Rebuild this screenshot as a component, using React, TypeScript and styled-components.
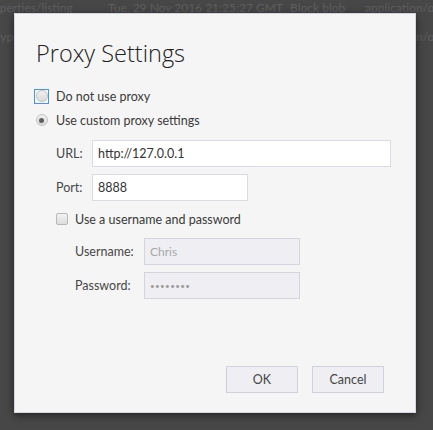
import React from 'react';
import styled, { createGlobalStyle } from 'styled-components';

const GlobalStyle = createGlobalStyle`
  html, body {
    margin: 0;
    padding: 0;
    background: #474747;
  }
  body {
    font-family: "Lato", "Noto Sans", sans-serif;
  }
`;

const Page = styled.div`
  position: relative;
  width: 433px;
  height: 430px;
  overflow: hidden;
  background: #474747;
`;

const Backdrop = styled.div`
  display: flex;
  flex-direction: column;
  gap: 13px;
  color: #5f5f5f;
  font-size: 12px;
  white-space: nowrap;
`;

const BackRow = styled.div<{ $shift: number }>`
  display: flex;
  margin-left: ${(p) => p.$shift}px;
  height: 16px;
  line-height: 16px;
`;

const BackCell = styled.span<{ $width?: number }>`
  flex: 0 0 ${(p) => (p.$width ? `${p.$width}px` : 'auto')};
  overflow: hidden;
`;

const Dialog = styled.div`
  position: absolute;
  left: 14px;
  top: 13px;
  width: 402px;
  height: 400px;
  background: #f5f5f5;
  border: 1px solid #d4d6e0;
  box-shadow: 0 2px 8px rgba(0, 0, 0, 0.55);
  display: flex;
  flex-direction: column;
  padding: 0 31px 0 19px;
  box-sizing: border-box;
  color: #3a3a3a;
  font-size: 12.5px;
`;

const Title = styled.h1`
  margin: 24px 0 20px 2px;
  font-family: "Open Sans", "Noto Sans", sans-serif;
  font-weight: 300;
  font-size: 23.5px;
  line-height: 30px;
  color: #222;
`;

const OptionRow = styled.label<{ $indent?: number }>`
  display: flex;
  align-items: center;
  gap: 7px;
  height: 16px;
  margin-bottom: 8px;
  padding-left: ${(p) => p.$indent ?? 0}px;
`;

const RadioFrame = styled.span<{ $focused?: boolean }>`
  display: flex;
  align-items: center;
  justify-content: center;
  width: 15px;
  height: 15px;
  box-sizing: border-box;
  border: 1px solid ${(p) => (p.$focused ? '#4a93ea' : 'transparent')};
`;

const Radio = styled.span<{ $checked?: boolean }>`
  position: relative;
  width: 12px;
  height: 12px;
  border-radius: 50%;
  border: 1px solid #c4c4c4;
  background: linear-gradient(#f0f0f0, #dadada);
  box-sizing: border-box;
  &::after {
    content: '';
    display: ${(p) => (p.$checked ? 'block' : 'none')};
    position: absolute;
    left: 2.5px;
    top: 2.5px;
    width: 5px;
    height: 5px;
    border-radius: 50%;
    background: #5e5e5e;
  }
`;

const Checkbox = styled.span`
  width: 12px;
  height: 12px;
  border-radius: 2px;
  border: 1px solid #b8b8b8;
  background: linear-gradient(#f2f2f2, #dcdcdc);
  box-sizing: border-box;
`;

const Fields = styled.div<{ $label: number; $indent: number; $margin: string }>`
  display: grid;
  grid-template-columns: ${(p) => p.$label}px auto;
  row-gap: 7px;
  align-items: center;
  padding-left: ${(p) => p.$indent}px;
  margin: ${(p) => p.$margin};
`;

const FieldLabel = styled.span`
  color: #474747;
`;

const Input = styled.div<{ $width: number; $disabled?: boolean }>`
  width: ${(p) => p.$width}px;
  height: 27px;
  box-sizing: border-box;
  border: 1px solid ${(p) => (p.$disabled ? '#d4d4dc' : '#dadae2')};
  background: ${(p) => (p.$disabled ? '#efeff3' : '#fff')};
  color: ${(p) => (p.$disabled ? '#a8a8a8' : '#333')};
  display: flex;
  align-items: center;
  padding-left: 5px;
  font-size: ${(p) => (p.$disabled ? '12px' : '12.5px')};
`;

const Dots = styled.span`
  font-size: 8px;
  letter-spacing: 0.4px;
  color: #9c9c9c;
`;

const Footer = styled.div`
  margin-top: auto;
  margin-bottom: 19px;
  display: flex;
  justify-content: flex-end;
  gap: 14px;
`;

const Button = styled.button`
  width: 72px;
  height: 27px;
  border: 1px solid #cfd2dd;
  background: #efeff3;
  color: #444;
  font-family: inherit;
  font-size: 12.5px;
  padding: 0;
`;

export default function App() {
  return (
    <Page>
      <GlobalStyle />
      <Backdrop>
        <BackRow $shift={-18}>
          <BackCell $width={126}>properties/listing</BackCell>
          <BackCell $width={182}>Tue, 29 Nov 2016 21:25:27 GMT</BackCell>
          <BackCell $width={75}>Block blob</BackCell>
          <BackCell>application/octet-stream</BackCell>
        </BackRow>
        <BackRow $shift={-4}>
          <BackCell $width={369}>type</BackCell>
          <BackCell>application/octet-stream</BackCell>
        </BackRow>
      </Backdrop>
      <Dialog>
        <Title>Proxy Settings</Title>
        <OptionRow>
          <RadioFrame $focused>
            <Radio />
          </RadioFrame>
          <span>Do not use proxy</span>
        </OptionRow>
        <OptionRow>
          <RadioFrame>
            <Radio $checked />
          </RadioFrame>
          <span>Use custom proxy settings</span>
        </OptionRow>
        <Fields $label={36} $indent={22} $margin="4px 0 10px">
          <FieldLabel>URL:</FieldLabel>
          <Input $width={299}>http://127.0.0.1</Input>
          <FieldLabel>Port:</FieldLabel>
          <Input $width={156}>8888</Input>
        </Fields>
        <OptionRow $indent={22}>
          <Checkbox />
          <span>Use a username and password</span>
        </OptionRow>
        <Fields $label={69} $indent={41} $margin="3px 0 0">
          <FieldLabel>Username:</FieldLabel>
          <Input $width={156} $disabled>
            Chris
          </Input>
          <FieldLabel>Password:</FieldLabel>
          <Input $width={156} $disabled>
            <Dots>••••••••</Dots>
          </Input>
        </Fields>
        <Footer>
          <Button>OK</Button>
          <Button>Cancel</Button>
        </Footer>
      </Dialog>
    </Page>
  );
}
